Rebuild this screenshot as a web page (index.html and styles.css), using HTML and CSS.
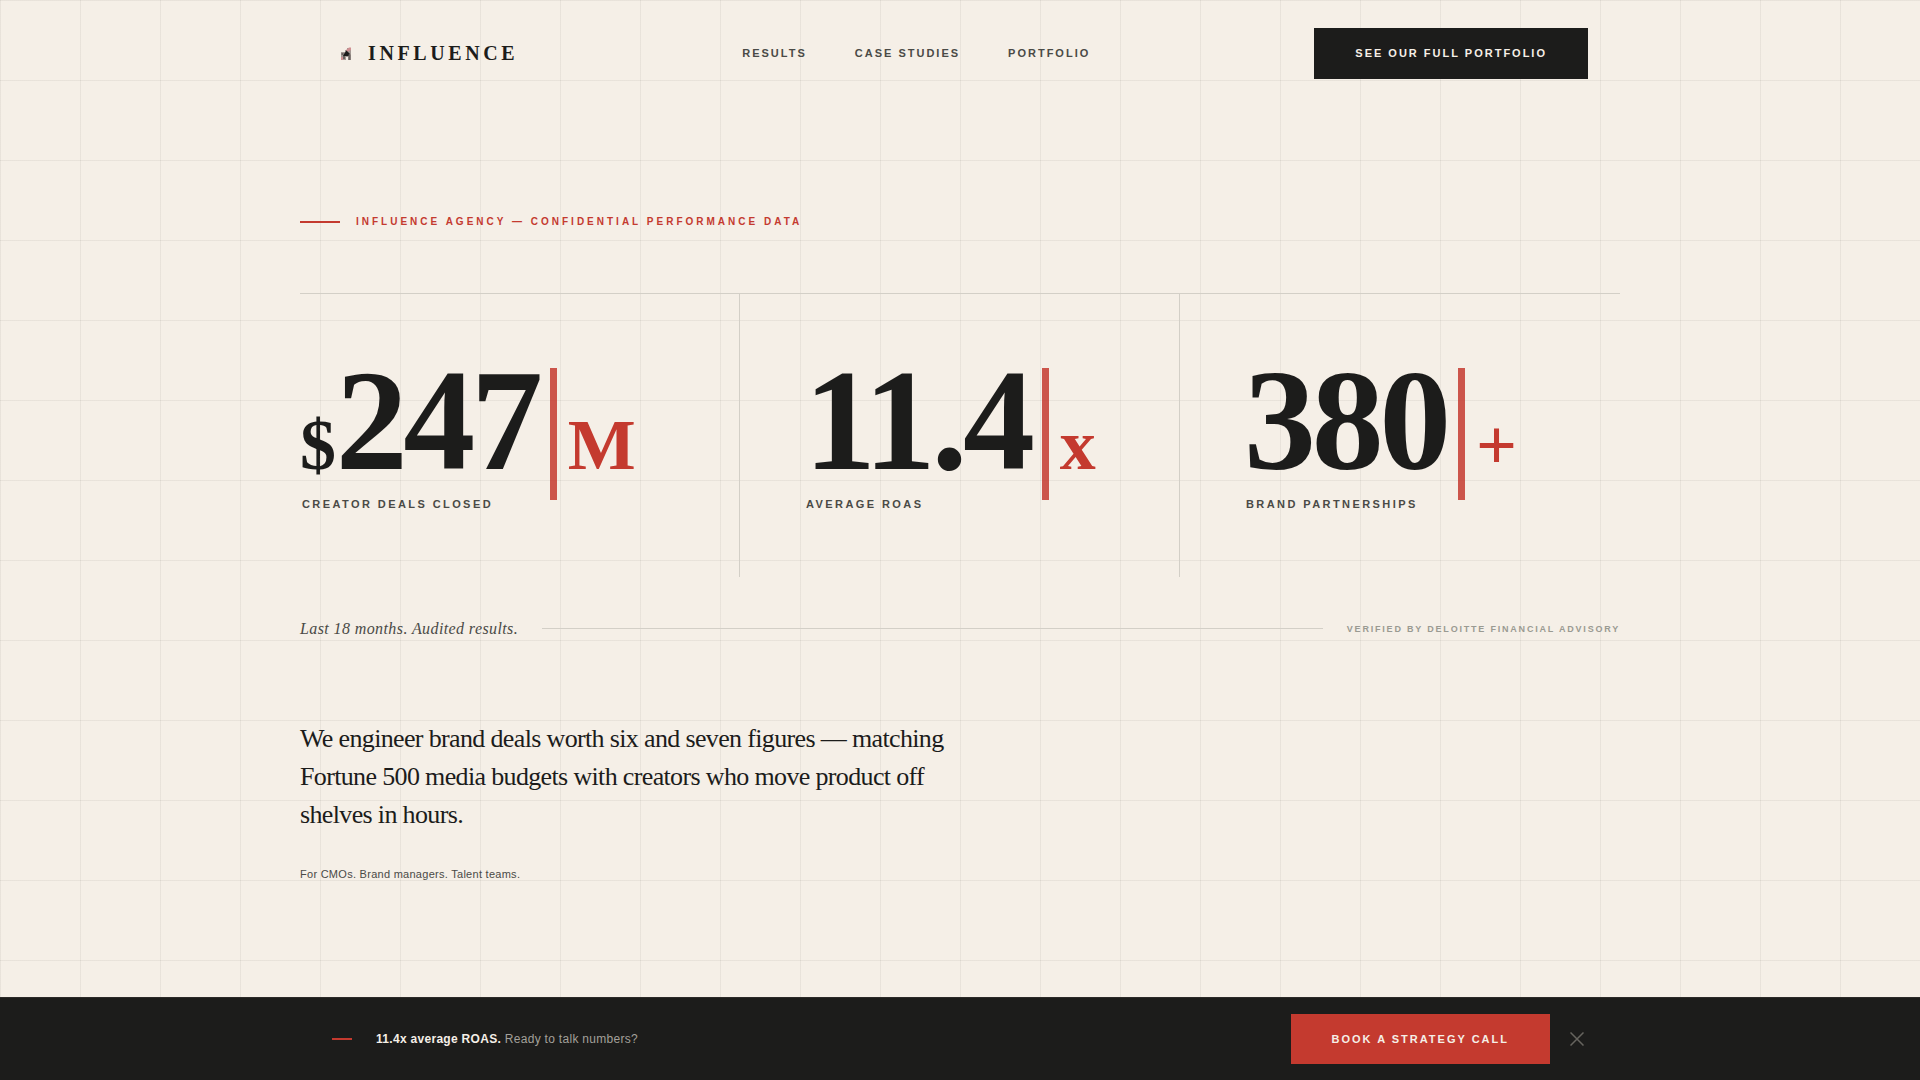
FILE: index.html
```html
<!DOCTYPE html>
<html lang="en">
<head>
    <meta charset="UTF-8">
    <meta name="viewport" content="width=device-width, initial-scale=1.0">
    <title>Influence Agency</title>
    <link rel="stylesheet" href="styles.css">
</head>
<body>

<header class="nav">
    <a href="#" class="logo">
        <svg class="logo-icon" viewBox="0 0 28 28" aria-hidden="true">
            <path d="M9 12h4v-2h2V8h4v12h-3v-3h-2v3H9z" fill="#a49a95"/>
            <path d="M9 17h2v3H9zM14 10l3-2.500h2V10l-4 2z" fill="#cf8f92"/>
            <path d="M11 15.500l3.500-5 3 3v2.500h-6z" fill="#1c1c1c"/>
            <path d="M9.500 13h2v2h-2zM16.500 14.500h2V20h-2zM11 16h2v3h-2z" fill="#6a6360"/>
        </svg>
        <span>INFLUENCE</span>
    </a>
    <nav class="nav-links">
        <a href="#results">RESULTS</a>
        <a href="#cases">CASE STUDIES</a>
        <a href="#portfolio">PORTFOLIO</a>
    </nav>
    <a href="#portfolio" class="btn btn-dark">SEE OUR FULL PORTFOLIO</a>
</header>

<main class="hero">
    <p class="eyebrow">INFLUENCE AGENCY — CONFIDENTIAL PERFORMANCE DATA</p>

    <section class="stats" id="results">
        <div class="stat">
            <div class="stat-value"><span class="prefix">$</span>247<span class="bar"></span><span class="suffix">M</span></div>
            <div class="stat-label">CREATOR DEALS CLOSED</div>
        </div>
        <div class="stat">
            <div class="stat-value">11.4<span class="bar"></span><span class="suffix">x</span></div>
            <div class="stat-label">AVERAGE ROAS</div>
        </div>
        <div class="stat">
            <div class="stat-value">380<span class="bar"></span><span class="suffix">+</span></div>
            <div class="stat-label">BRAND PARTNERSHIPS</div>
        </div>
    </section>

    <div class="audit">
        <span class="audit-text">Last 18 months. Audited results.</span>
        <span class="audit-line"></span>
        <span class="audit-source">VERIFIED BY DELOITTE FINANCIAL ADVISORY</span>
    </div>

    <p class="statement">We engineer brand deals worth six and seven figures — matching Fortune 500 media budgets with creators who move product off shelves in hours.</p>
    <p class="audience">For CMOs. Brand managers. Talent teams.</p>
</main>

<div class="sticky">
    <div class="sticky-inner">
        <span class="sticky-dash"></span>
        <p class="sticky-text"><strong>11.4x average ROAS.</strong> Ready to talk numbers?</p>
        <a href="#call" class="btn btn-red">BOOK A STRATEGY CALL</a>
        <button type="button" class="close" aria-label="Close">
            <svg viewBox="0 0 14 14" width="14" height="14"><path d="M0.500 0.500l13 13M13.500 0.500l-13 13" stroke="currentColor" stroke-width="1.500" fill="none"/></svg>
        </button>
    </div>
</div>

</body>
</html>
```
FILE: styles.css
```css
:root {
    --paper: #f5efe7;
    --ink: #1c1c1b;
    --red: #c43a2f;
    --muted: #4a4a46;
    --rule: #d3cfc7;
    --serif: "Liberation Serif", "Times New Roman", serif;
    --sans: "Liberation Sans", Arial, sans-serif;
}

* {
    box-sizing: border-box;
    margin: 0;
    padding: 0;
}

body {
    min-height: 100vh;
    background-color: var(--paper);
    background-image:
        linear-gradient(to right, rgba(28, 28, 26, 0.06) 1px, transparent 1px),
        linear-gradient(to bottom, rgba(28, 28, 26, 0.06) 1px, transparent 1px);
    background-size: 80px 80px;
    color: var(--ink);
    font-family: var(--sans);
}

a {
    color: inherit;
    text-decoration: none;
}

/* navigation */
.nav {
    display: flex;
    align-items: center;
    justify-content: space-between;
    max-width: 1320px;
    margin: 0 auto;
    padding: 28px 32px;
}

.logo {
    display: flex;
    align-items: center;
    gap: 8px;
    font-family: var(--serif);
    font-size: 20px;
    font-weight: bold;
    letter-spacing: 0.18em;
}

.logo-icon {
    width: 28px;
    height: 28px;
}

.nav-links {
    display: flex;
    gap: 48px;
    color: var(--muted);
    font-size: 11px;
    font-weight: bold;
    line-height: 19px;
    letter-spacing: 2px;
}

.btn {
    padding: 16px 41px;
    color: var(--paper);
    font-size: 11px;
    font-weight: bold;
    line-height: 18px;
    letter-spacing: 2px;
    white-space: nowrap;
}

.btn-dark {
    background: var(--ink);
    line-height: 19px;
}

.btn-red {
    background: var(--red);
}

/* hero */
.hero {
    max-width: 1320px;
    margin: 0 auto;
    padding: 106px 0 200px;
}

.eyebrow {
    display: flex;
    align-items: center;
    gap: 16px;
    margin-bottom: 62px;
    color: var(--red);
    font-size: 10px;
    font-weight: bold;
    line-height: 18px;
    letter-spacing: 3px;
}

.eyebrow::before {
    content: "";
    width: 40px;
    height: 2px;
    background: var(--red);
}

.stats {
    display: grid;
    grid-template-columns: repeat(3, 1fr);
    border-top: 1px solid var(--rule);
}

.stat {
    padding: 64px 0 64px 64px;
    border-right: 1px solid var(--rule);
}

.stat:first-child {
    padding-left: 0;
}

.stat:last-child {
    border-right: none;
}

.stat-value {
    height: 125px;
    font-family: var(--serif);
    font-size: 144px;
    font-weight: bold;
    line-height: 125px;
    letter-spacing: -0.03em;
    white-space: nowrap;
}

.prefix,
.suffix {
    font-size: 72px;
    line-height: 72px;
}

.prefix {
    margin-right: 4px;
}

.suffix {
    color: var(--red);
}

.bar {
    display: inline-block;
    width: 7px;
    height: 132px;
    margin: 0 11px 4px 11px;
    background: var(--red);
    opacity: 0.85;
    vertical-align: middle;
}

.stat-label {
    margin-top: 12px;
    padding-left: 2px;
    color: var(--muted);
    font-size: 11px;
    font-weight: bold;
    line-height: 18px;
    letter-spacing: 0.22em;
}

.audit {
    display: flex;
    align-items: center;
    gap: 24px;
    margin-top: 40px;
}

.audit-text {
    color: var(--muted);
    font-family: var(--serif);
    font-size: 16px;
    font-style: italic;
    line-height: 23px;
    letter-spacing: 0.025em;
}

.audit-line {
    flex: 1;
    height: 1px;
    background: var(--rule);
}

.audit-source {
    color: #9a9a92;
    font-size: 9px;
    font-weight: bold;
    letter-spacing: 0.2em;
}

.statement {
    max-width: 680px;
    margin-top: 80px;
    font-family: var(--serif);
    font-size: 26px;
    line-height: 38px;
    letter-spacing: -0.025em;
}

.audience {
    margin-top: 31px;
    color: var(--muted);
    font-size: 11px;
    line-height: 18px;
    letter-spacing: 0.025em;
}

/* bottom bar */
.sticky {
    position: fixed;
    right: 0;
    bottom: 0;
    left: 0;
    border-top: 1px solid #2c2a28;
    background: var(--ink);
}

.sticky-inner {
    display: flex;
    align-items: center;
    max-width: 1320px;
    margin: 0 auto;
    padding: 16px 32px;
}

.sticky-dash {
    width: 20px;
    height: 2px;
    margin-right: 24px;
    background: var(--red);
}

.sticky-text {
    flex: 1;
    color: #a3a09a;
    font-size: 12px;
    letter-spacing: 0.025em;
}

.sticky-text strong {
    color: var(--paper);
}

.close {
    margin-left: 16px;
    padding: 4px;
    border: none;
    background: none;
    color: #66645f;
    cursor: pointer;
}

.close svg {
    display: block;
}
```
